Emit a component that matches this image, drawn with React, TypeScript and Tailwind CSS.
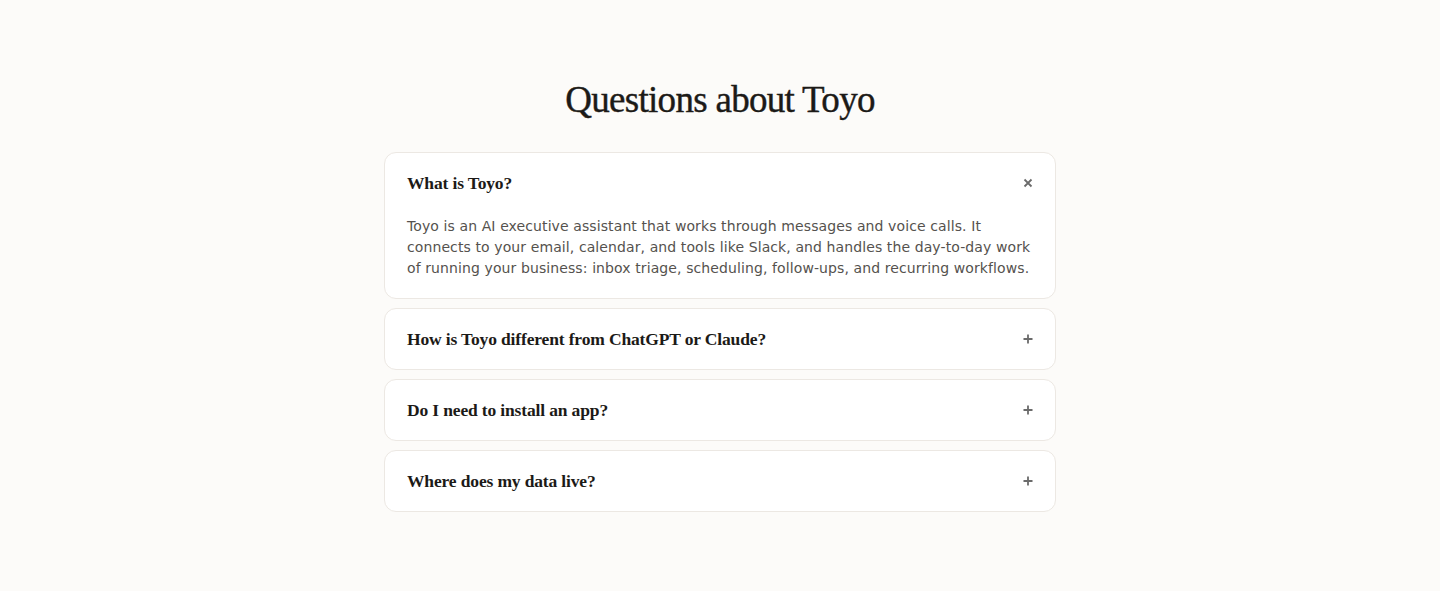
import React from "react";

const items = [
  {
    q: "What is Toyo?",
    a: [
      "Toyo is an AI executive assistant that works through messages and voice calls. It",
      "connects to your email, calendar, and tools like Slack, and handles the day-to-day work",
      "of running your business: inbox triage, scheduling, follow-ups, and recurring workflows.",
    ],
    open: true,
  },
  { q: "How is Toyo different from ChatGPT or Claude?", open: false },
  { q: "Do I need to install an app?", open: false },
  { q: "Where does my data live?", open: false },
];

function Icon({ open }: { open: boolean }) {
  return (
    <svg width="12" height="12" viewBox="0 0 12 12" className="text-[#6b6b6b]">
      {open ? (
        <path d="M2.5 2.5L9.5 9.5M9.5 2.5L2.5 9.5" stroke="currentColor" strokeWidth="1.8" />
      ) : (
        <path d="M6 1.5V10.5M1.5 6H10.5" stroke="currentColor" strokeWidth="1.8" />
      )}
    </svg>
  );
}

export default function App() {
  return (
    <div className="min-h-[591px] bg-[#fcfbf9] flex flex-col items-center pt-[76px]">
      <h1 className="text-[37px] leading-[48px] text-[#1c1a17] tracking-[-0.7px] [font-family:'Liberation_Serif',serif] [-webkit-text-stroke:0.4px_#1c1a17]">
        Questions about Toyo
      </h1>
      <div className="mt-[28px] w-[672px] flex flex-col gap-[9px]">
        {items.map((it, i) => (
          <div key={i} className="bg-white border border-[#ece8e3] rounded-[12px]">
            <div className="h-[60px] flex items-center justify-between pl-[22px] pr-[21px]">
              <span className="text-[17.5px] font-bold text-[#1c1a17] tracking-[-0.15px] [font-family:'Liberation_Serif',serif]">
                {it.q}
              </span>
              <Icon open={it.open} />
            </div>
            {it.a && (
              <p className="px-[22px] pt-[3px] pb-[19px] text-[14px] leading-[21px] tracking-[0.1px] text-[#55524e] [font-family:'DejaVu_Sans',sans-serif]">
                {it.a.map((line, j) => (
                  <span key={j} className="block whitespace-nowrap">
                    {line}
                  </span>
                ))}
              </p>
            )}
          </div>
        ))}
      </div>
    </div>
  );
}
